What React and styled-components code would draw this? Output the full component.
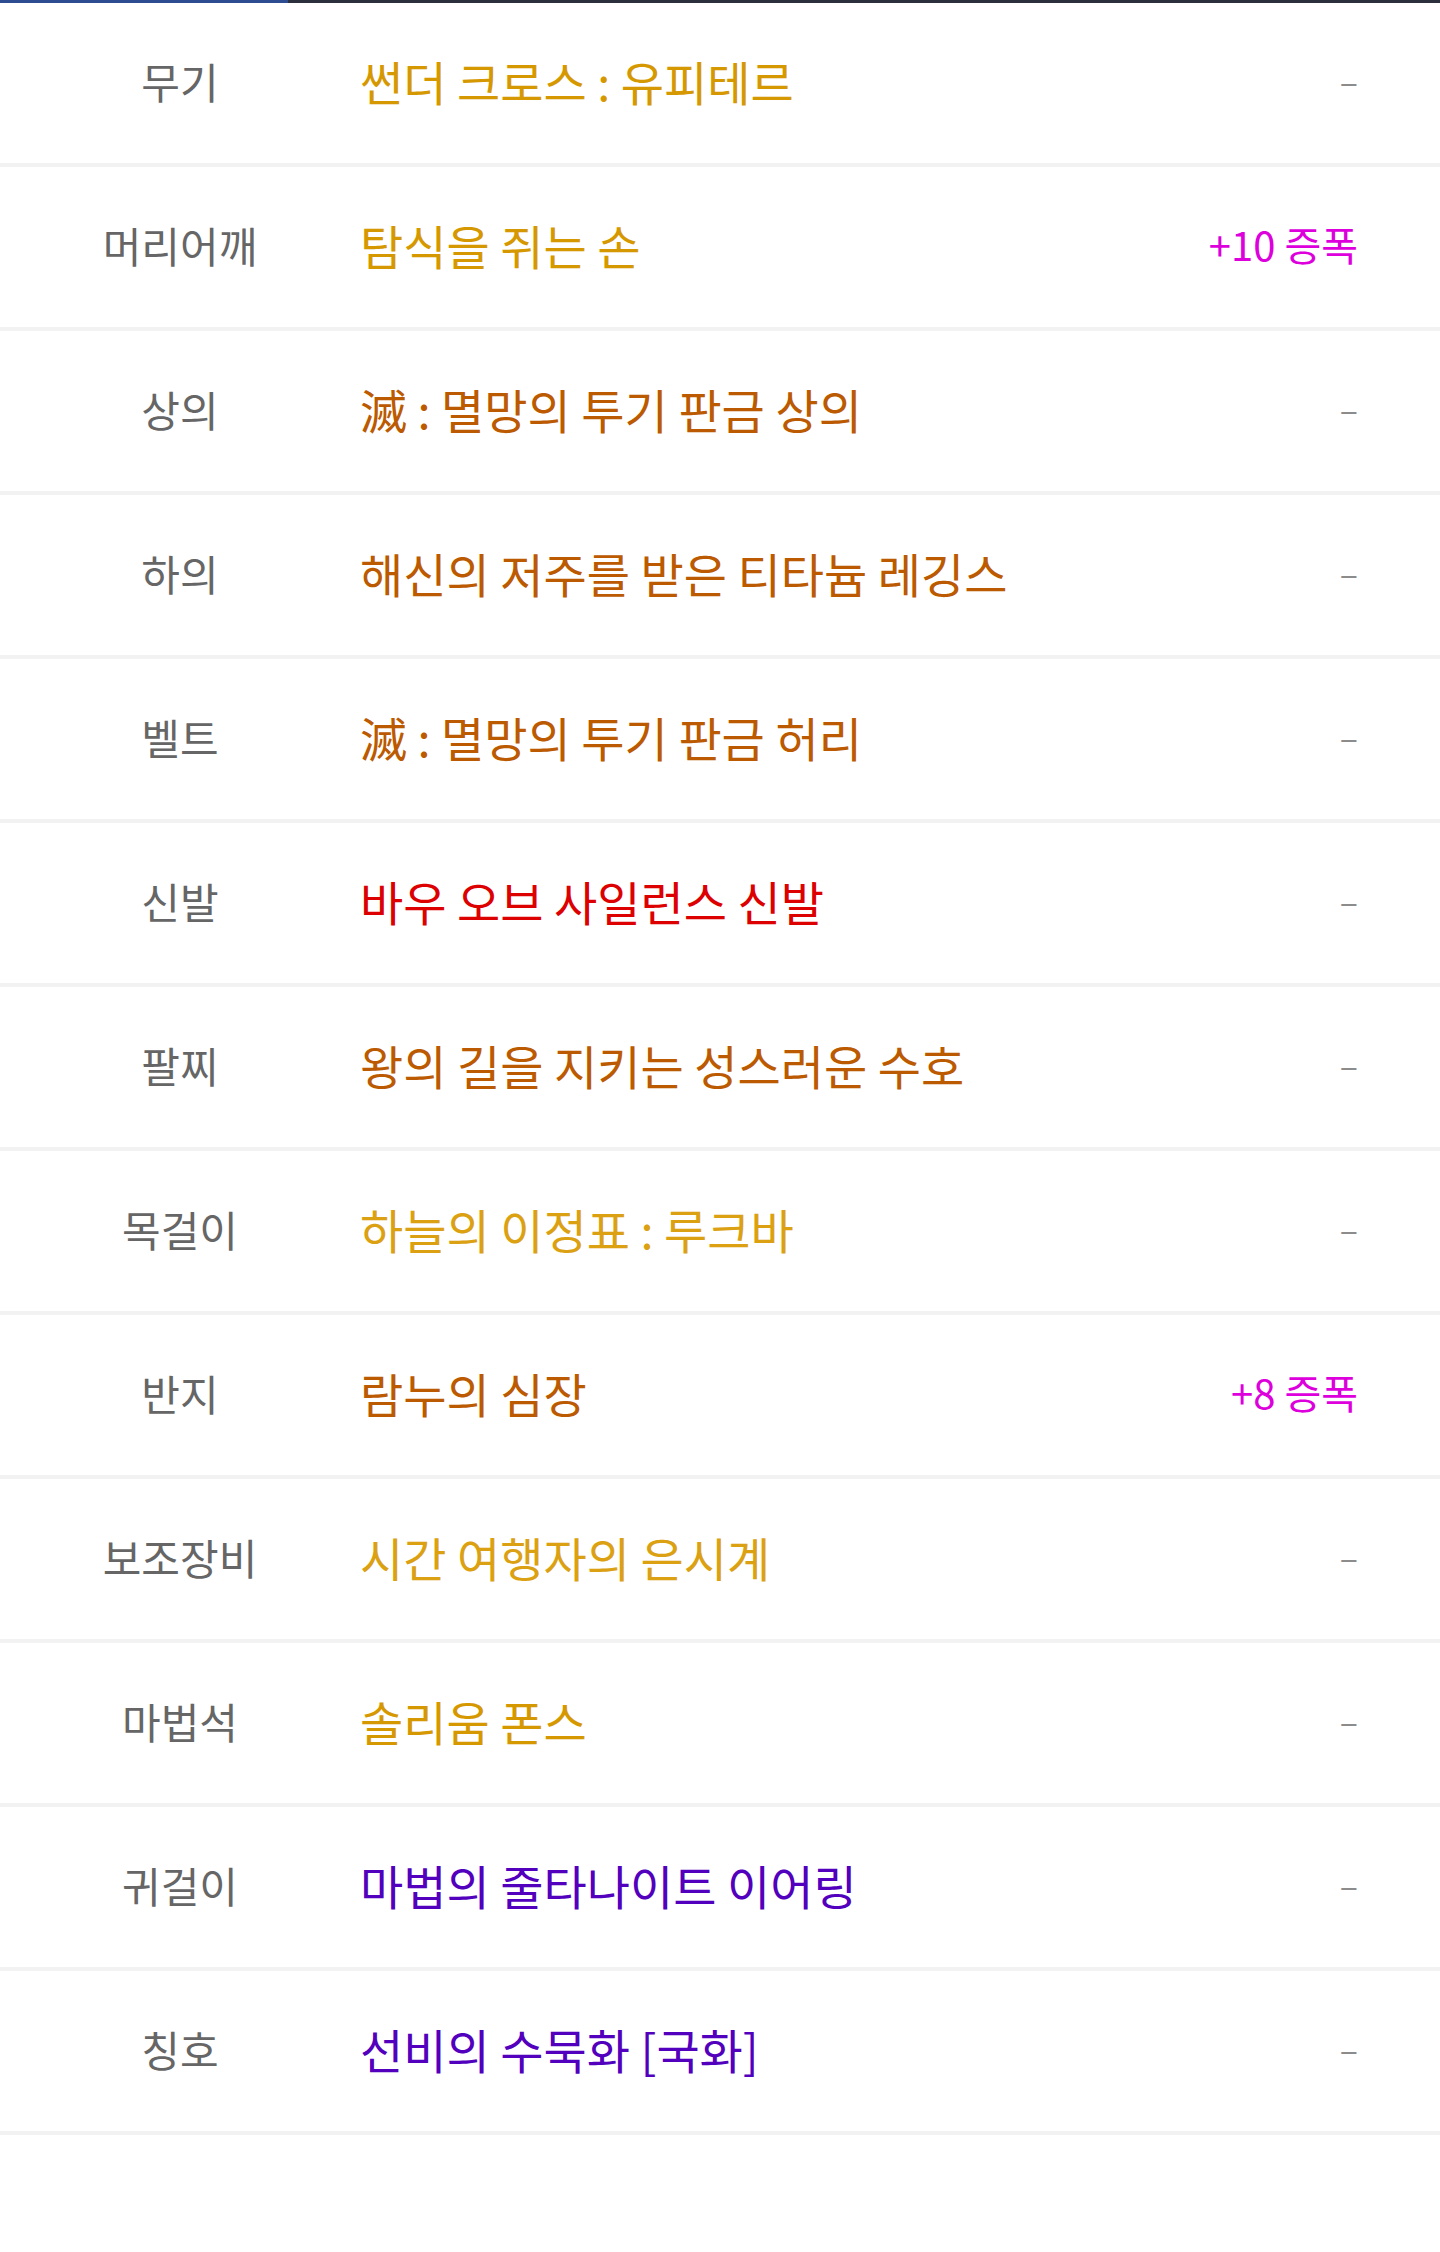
import React from "react";
import styled, { createGlobalStyle } from "styled-components";

const GlobalStyle = createGlobalStyle`
  html, body {
    margin: 0;
    padding: 0;
    background: #ffffff;
  }
  body {
    font-family: "Noto Sans CJK KR", "Noto Sans", sans-serif;
  }
  * {
    box-sizing: border-box;
  }
`;

const items = [
  { slot: "무기", name: "썬더 크로스 : 유피테르", grade: "gold", extra: null },
  { slot: "머리어깨", name: "탐식을 쥐는 손", grade: "gold", extra: "+10 증폭" },
  { slot: "상의", name: "滅 : 멸망의 투기 판금 상의", grade: "epic", extra: null },
  { slot: "하의", name: "해신의 저주를 받은 티타늄 레깅스", grade: "epic", extra: null },
  { slot: "벨트", name: "滅 : 멸망의 투기 판금 허리", grade: "epic", extra: null },
  { slot: "신발", name: "바우 오브 사일런스 신발", grade: "red", extra: null },
  { slot: "팔찌", name: "왕의 길을 지키는 성스러운 수호", grade: "epic", extra: null },
  { slot: "목걸이", name: "하늘의 이정표 : 루크바", grade: "light", extra: null },
  { slot: "반지", name: "람누의 심장", grade: "epic", extra: "+8 증폭" },
  { slot: "보조장비", name: "시간 여행자의 은시계", grade: "light", extra: null },
  { slot: "마법석", name: "솔리움 폰스", grade: "gold", extra: null },
  { slot: "귀걸이", name: "마법의 줄타나이트 이어링", grade: "purple", extra: null },
  { slot: "칭호", name: "선비의 수묵화 [국화]", grade: "purple", extra: null },
];

const gradeColors = {
  gold: "#d69800",
  light: "#dba113",
  epic: "#bb5a00",
  red: "#dd0000",
  purple: "#5200bd",
};

function App() {
  return (
    <Wrapper>
      <GlobalStyle />
      <TopBar>
        <TopBarActive />
        <TopBarRest />
      </TopBar>
      <List>
        {items.map((item) => (
          <Row key={item.slot}>
            <Slot>{item.slot}</Slot>
            <ItemName $color={gradeColors[item.grade]}>{item.name}</ItemName>
            {item.extra ? (
              <Amplify>{item.extra}</Amplify>
            ) : (
              <Empty>–</Empty>
            )}
          </Row>
        ))}
      </List>
    </Wrapper>
  );
}

const Wrapper = styled.div`
  width: 1440px;
  min-height: 2252px;
  background: #ffffff;
`;

const TopBar = styled.div`
  display: flex;
  height: 3px;
`;

const TopBarActive = styled.div`
  width: 288px;
  background: #2e4c92;
`;

const TopBarRest = styled.div`
  flex: 1;
  background: #2b303c;
`;

const List = styled.ul`
  list-style: none;
  margin: 0;
  padding: 0;
`;

const Row = styled.li`
  display: grid;
  grid-template-columns: 360px 1fr auto;
  align-items: center;
  height: 164px;
  padding: 0 82px 6px 0;
  border-bottom: 4px solid #f2f2f2;
`;

const Slot = styled.span`
  text-align: center;
  font-size: 42px;
  color: #666666;
`;

const ItemName = styled.span`
  font-size: 47px;
  color: ${(p) => p.$color};
  white-space: nowrap;
`;

const Amplify = styled.span`
  font-size: 40px;
  color: #dd00dd;
`;

const Empty = styled.span`
  font-size: 34px;
  color: #8c8c8c;
`;

export default App;
